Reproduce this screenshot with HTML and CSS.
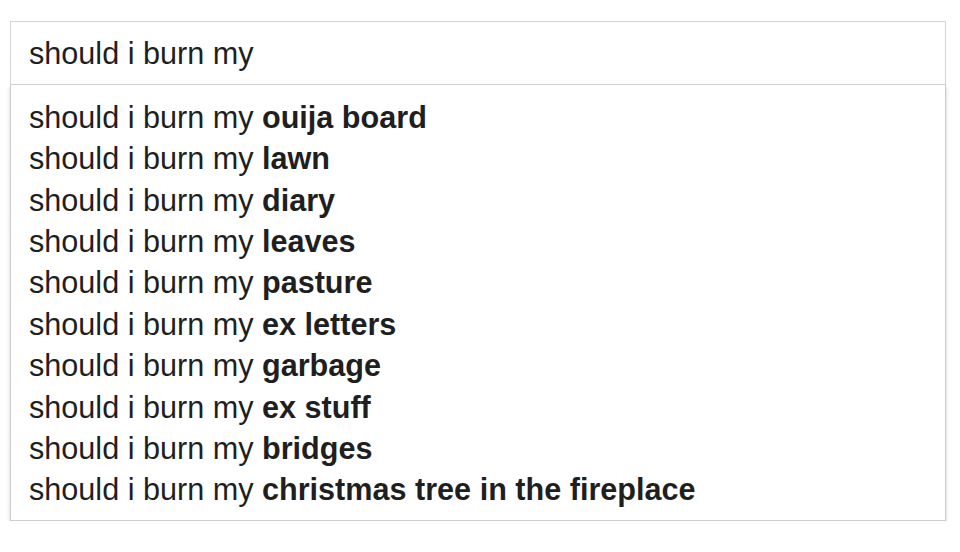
FILE: index.html
```html
<!DOCTYPE html>
<html lang="en">
<head>
<meta charset="utf-8">
<title>should i burn my</title>
<link rel="stylesheet" href="styles.css">
</head>
<body>
<div class="search">
  <div class="search-input">should i burn my</div>
  <ul class="suggestions">
    <li>should i burn my <b>ouija board</b></li>
    <li>should i burn my <b>lawn</b></li>
    <li>should i burn my <b>diary</b></li>
    <li>should i burn my <b>leaves</b></li>
    <li>should i burn my <b>pasture</b></li>
    <li>should i burn my <b>ex letters</b></li>
    <li>should i burn my <b>garbage</b></li>
    <li>should i burn my <b>ex stuff</b></li>
    <li>should i burn my <b>bridges</b></li>
    <li>should i burn my <b>christmas tree in the fireplace</b></li>
  </ul>
</div>
</body>
</html>
```

FILE: styles.css
```css
html, body {
  margin: 0;
  padding: 0;
  background: #ffffff;
}

body {
  padding: 21px 14px 0 10px;
  font-family: "Liberation Sans", Arial, sans-serif;
  font-size: 30.6px;
  color: #1f1f1f;
}

.search {
  width: 936px;
}

.search-input {
  border: 1px solid #d6d6d6;
  height: 62px;
  line-height: 62px;
  padding-left: 18px;
  background: #fff;
}

.suggestions {
  list-style: none;
  margin: 0;
  padding: 11.8px 0 9.2px 18px;
  border: 1px solid #cccccc;
  border-top: none;
  box-shadow: 0 2px 4px rgba(0, 0, 0, 0.18);
  background: #fff;
}

.suggestions li {
  line-height: 41.4px;
  white-space: nowrap;
}

.suggestions b {
  font-weight: bold;
}
```
